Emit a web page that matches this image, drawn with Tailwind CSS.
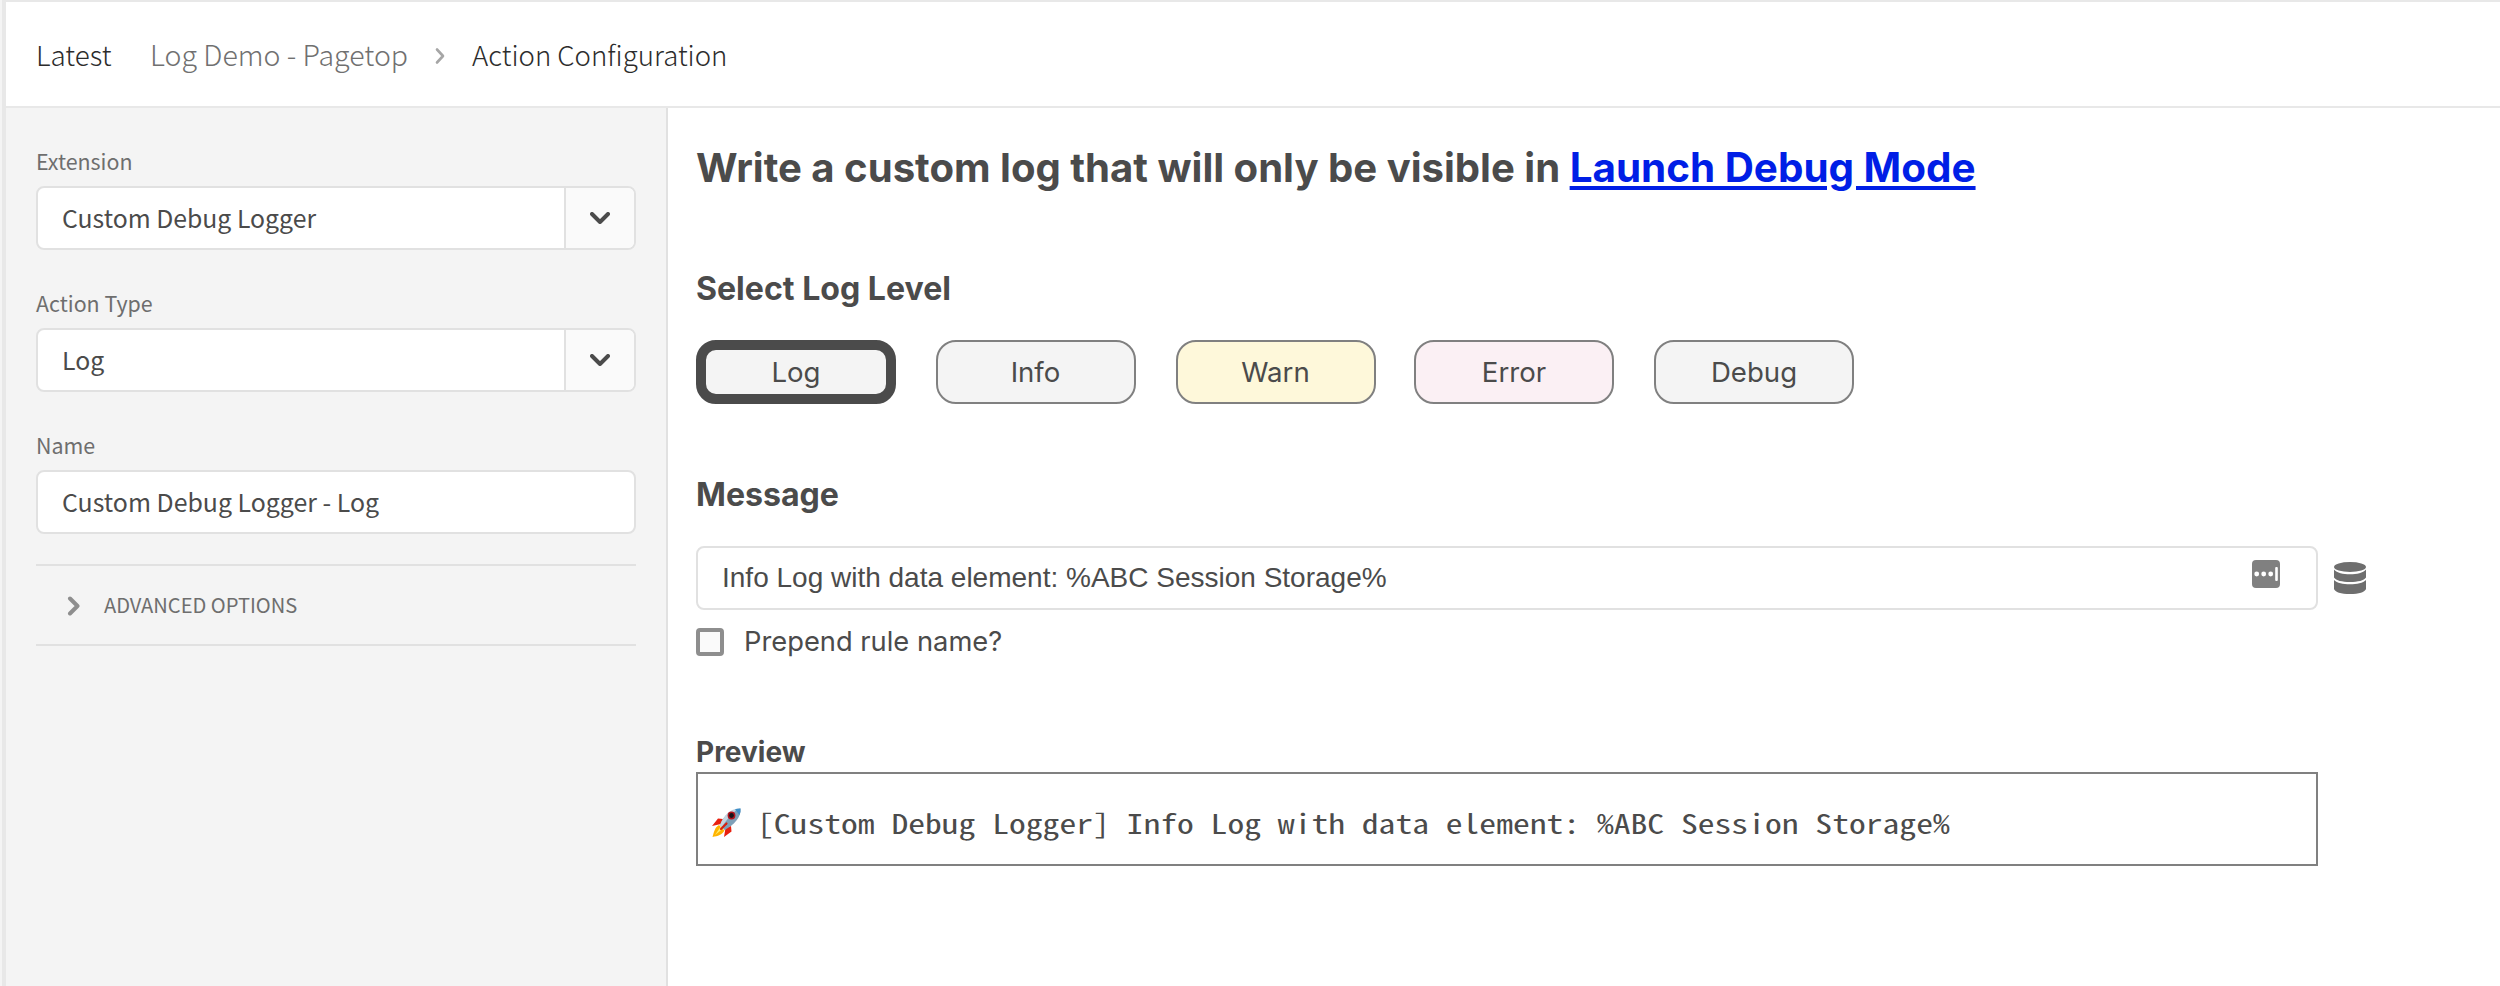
<!DOCTYPE html>
<html lang="en">
<head>
<meta charset="utf-8">
<title>Action Configuration</title>
<script src="https://cdn.jsdelivr.net/npm/@tailwindcss/browser@4"></script>
</head>
<body class="h-[986px] overflow-hidden bg-[#f4f4f4] pl-[2px] text-[#4b4b4b]">
<div class="flex h-full flex-col border-l-4 border-[#e8e8e8] bg-white font-['Noto_Sans_CJK_SC',sans-serif]">

  <header class="flex h-[108px] shrink-0 items-center border-y-2 border-[#e8e8e8] pt-px pl-[30px] font-light whitespace-nowrap text-[#2c2c2c]">
    <span class="w-[114px] text-[27.8px]">Latest</span>
    <span class="w-[284px] text-[28.5px] text-[#707070]">Log Demo - Pagetop</span>
    <svg class="mt-[3px] w-[38px] shrink-0" height="18" viewBox="0 0 38 18" fill="none"><path d="M3 2.500 9 9l-6 6.500" stroke="#a6a6a6" stroke-width="2.600" stroke-linecap="round" stroke-linejoin="round"/></svg>
    <span class="text-[27.6px]">Action Configuration</span>
  </header>

  <div class="flex min-h-0 flex-1">
    <aside class="w-[662px] shrink-0 border-r-2 border-[#e1e1e1] bg-[#f4f4f4] pt-[41px] pr-[30px] pl-[30px]">
      <label class="block text-[21.4px] leading-[24px] text-[#6e6e6e]">Extension</label>
      <div class="mt-[13px] flex h-[64px] overflow-hidden rounded-lg border-2 border-[#e1e1e1] bg-white">
        <div class="flex flex-1 items-center pb-[2px] pl-[24px] text-[24.8px] leading-[30px]">Custom Debug Logger</div>
        <div class="flex w-[70px] items-center justify-center border-l-2 border-[#e1e1e1] bg-[#fafafa]">
          <svg width="20" height="12" viewBox="0 0 20 12" class="mb-[1px]" fill="none"><path d="M2 2l8 8 8-8" stroke="#4b4b4b" stroke-width="4" stroke-linecap="round" stroke-linejoin="round"/></svg>
        </div>
      </div>

      <label class="mt-[41px] block text-[21.4px] leading-[24px] text-[#6e6e6e]">Action Type</label>
      <div class="mt-[13px] flex h-[64px] overflow-hidden rounded-lg border-2 border-[#e1e1e1] bg-white">
        <div class="flex flex-1 items-center pb-[2px] pl-[24px] text-[24.8px] leading-[30px]">Log</div>
        <div class="flex w-[70px] items-center justify-center border-l-2 border-[#e1e1e1] bg-[#fafafa]">
          <svg width="20" height="12" viewBox="0 0 20 12" class="mb-[1px]" fill="none"><path d="M2 2l8 8 8-8" stroke="#4b4b4b" stroke-width="4" stroke-linecap="round" stroke-linejoin="round"/></svg>
        </div>
      </div>

      <label class="mt-[41px] block text-[21.4px] leading-[24px] text-[#6e6e6e]">Name</label>
      <div class="mt-[13px] flex h-[64px] items-center rounded-lg border-2 border-[#e1e1e1] bg-white pb-[2px] pl-[24px] text-[24.9px] leading-[30px]">Custom Debug Logger - Log</div>

      <div class="mt-[30px] flex h-[82px] items-center border-y-2 border-[#e1e1e1] pl-[31px] text-[20.1px] leading-[24px] text-[#6e6e6e]">
        <svg class="mt-[2px] mr-[23px]" width="14" height="20" viewBox="0 0 14 20" fill="none"><path d="M3 2.500 10.500 10 3 17.500" stroke="#8e8e8e" stroke-width="4" stroke-linecap="round" stroke-linejoin="round"/></svg>
        <span>ADVANCED OPTIONS</span>
      </div>
    </aside>

    <main class="flex-1 pt-[36px] pl-[28px] font-[Inter,sans-serif]">
      <h1 class="text-[40.1px] leading-[48px] font-bold whitespace-nowrap">Write a custom log that will only be visible in <a class="text-[40.4px] text-[#001ee6] underline decoration-4 underline-offset-[4px]">Launch Debug Mode</a></h1>

      <h2 class="mt-[77px] text-[32.1px] leading-[40px] font-bold">Select Log Level</h2>
      <div class="mt-[31px] flex gap-[39.500px] text-[27.6px]">
        <button class="h-[64px] w-[200px] rounded-[20px] border-[10px] border-[#4b4b4b] bg-[#f4f4f4] leading-[44px]">Log</button>
        <button class="h-[64px] w-[200px] rounded-[20px] border-2 border-[#808080] bg-[#f4f4f4] leading-[60px]">Info</button>
        <button class="ml-[0.500px] h-[64px] w-[200px] rounded-[20px] border-2 border-[#808080] bg-[#fef8da] leading-[60px]">Warn</button>
        <button class="ml-[-1px] h-[64px] w-[200px] rounded-[20px] border-2 border-[#808080] bg-[#fbf0f4] leading-[60px]">Error</button>
        <button class="ml-[0.500px] h-[64px] w-[200px] rounded-[20px] border-2 border-[#808080] bg-[#f4f4f4] leading-[60px]">Debug</button>
      </div>

      <h2 class="mt-[71px] text-[32.1px] leading-[40px] font-bold">Message</h2>
      <div class="mt-[31px] flex items-center">
        <div class="flex h-[64px] w-[1622px] items-center justify-between rounded-lg border-2 border-[#e1e1e1] bg-white pr-[36px] pl-[24px]">
          <span class="pb-[1px] font-['Liberation_Sans',sans-serif] text-[28px]">Info Log with data element: %ABC Session Storage%</span>
          <svg class="mb-[8px]" width="28" height="28" viewBox="0 0 28 28"><rect width="28" height="28" rx="4" fill="#808080"/><g fill="#fff"><circle cx="4.700" cy="14" r="2.400"/><circle cx="11.700" cy="14" r="2.400"/><circle cx="18.700" cy="14" r="2.400"/><rect x="23.200" y="7" width="2.600" height="14" rx="1"/></g></svg>
        </div>
        <svg class="ml-[16px]" width="32" height="32" viewBox="0 0 32 32" fill="#6e6e6e"><ellipse cx="16" cy="5" rx="16" ry="5"/><path d="M0 7.500C3 11 9 12.200 16 12.200S29 11 32 7.500V15.500C30 18.500 24 20 16 20S2 18.500 0 15.500Z"/><path d="M0 18C3 21 9 22.200 16 22.200S29 21 32 18V27C31 30 25 32 16 32S1 30 0 27Z"/></svg>
      </div>
      <div class="mt-[18px] flex h-[28px] items-center gap-[20px]">
        <span class="size-[28px] rounded-[4px] border-4 border-[#8e8e8e] bg-[#fafafa]"></span>
        <span class="pt-[1px] text-[27.3px]">Prepend rule name?</span>
      </div>

      <h3 class="mt-[78px] text-[28px] leading-[36px] font-bold">Preview</h3>
      <div class="mt-[2px] flex h-[94px] w-[1622px] items-center border-2 border-[#808080] pt-[8px] pl-[14px]">
        <svg class="mr-[15px] shrink-0" width="30" height="30" viewBox="0 0 30 30">
          <path d="M11 11 6 10.500 0 18l9-2zM19 18l.5 5.500L12 29l1.500-9z" fill="#e8200f"/>
          <path d="M7 17C3 19 2 24 0.500 29 6 28 10 27 12.500 22.500z" fill="#ffb400"/>
          <path d="M8.500 19 3 27l7.500-6z" fill="#fff06a"/>
          <path d="M8 17C12 7 19 1 28.500 .500 29.500 9 22 17 12.500 22z" fill="#7fa0b8"/>
          <path d="M8 17C12 7 19 1 26 .600 21 5 14 12 10 19z" fill="#c3d5e0"/>
          <path d="M23 1.200Q25.500 .400 28.500 .500 28.800 4 27.500 7z" fill="#3f8fc9"/>
          <path d="M14.500 15.500 9 21" stroke="#d82010" stroke-width="2.200" stroke-linecap="round"/>
          <circle cx="19.500" cy="7.500" r="3.900" fill="#b3121c"/><circle cx="19.500" cy="7.500" r="2.400" fill="#15151c"/>
        </svg>
        <span class="origin-left scale-x-[1.2444] font-['Noto_Sans_Mono_CJK_SC','DejaVu_Sans_Mono',monospace] text-[27px] whitespace-nowrap">[Custom Debug Logger] Info Log with data element: %ABC Session Storage%</span>
      </div>
    </main>
  </div>
</div>
</body>
</html>
